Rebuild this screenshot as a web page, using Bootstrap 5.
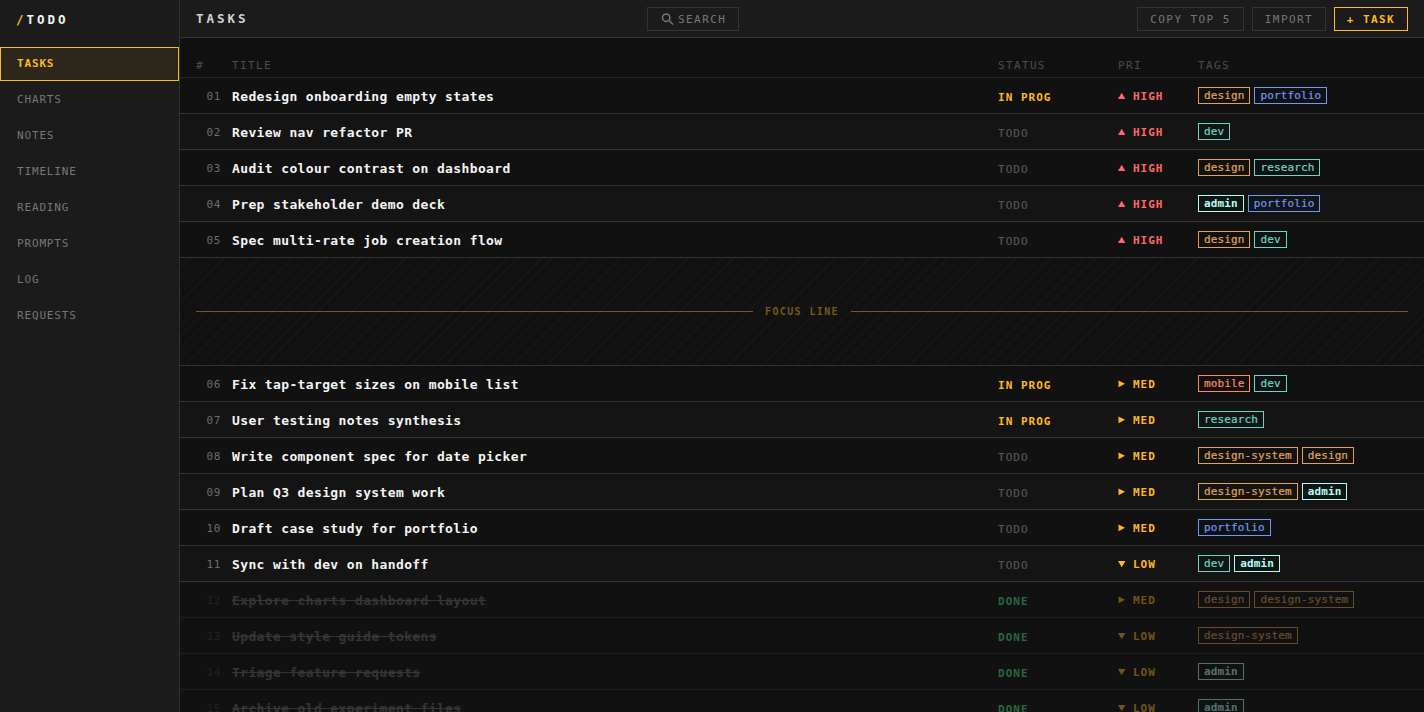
<!DOCTYPE html>
<html lang="en" data-bs-theme="dark">
<head>
<meta charset="utf-8">
<meta name="viewport" content="width=device-width, initial-scale=1">
<title>/TODO</title>
<link href="https://cdn.jsdelivr.net/npm/bootstrap@5.3.0/dist/css/bootstrap.min.css" rel="stylesheet">
<style>
  :root { --amber: #ffb824; --line: #333; --panel: #1b1b1b; --mono: "DejaVu Sans Mono", "Liberation Mono", monospace; }
  body { font-family: var(--mono); font-size: 11px; line-height: 16px; background: #111; color: #f5f5f5; }
  .side { width: 180px; background: var(--panel); border-right: 1px solid var(--line); }
  .brand { font: 700 12.5px/18px var(--mono); letter-spacing: 2.95px; height: 47px; padding: 11px 16px; }
  .brand span { color: var(--amber); }
  .side .nav { gap: 2px; }
  .side .nav-link { height: 34px; padding: 7px 16px; border: 1px solid transparent; border-radius: 0; font-size: 11px; line-height: 17px; letter-spacing: .84px; color: #777; }
  .side .nav-link.active { color: var(--amber); background: #2c261b; border-color: var(--amber); font-weight: 700; }
  .topbar { height: 38px; background: var(--panel); border-bottom: 1px solid var(--line); padding: 0 16px; }
  .topbar h1 { font: 700 12.5px/18px var(--mono); letter-spacing: 2.95px; color: #d4d4d4; }
  .tool { --bs-btn-padding-x: 0; --bs-btn-padding-y: 0; --bs-btn-border-radius: 0; --bs-btn-color: #777; --bs-btn-border-color: #333; --bs-btn-font-size: 11px; --bs-btn-line-height: 22px; height: 24px; width: 74px; letter-spacing: 1.43px; padding-top: 1px; line-height: 21px; }
  .tool-wide { width: 107px; }
  .tool-search { width: 92px; padding-left: 2px; }
  .tool-main { --bs-btn-color: var(--amber); --bs-btn-border-color: var(--amber); font-weight: 700; }
  .line { display: grid; grid-template-columns: 36px 1fr 120px 80px 210px; align-items: center; height: 36px; padding: 0 16px; border-bottom: 1px solid var(--line); }
  .line-head { height: 40px; padding-top: 17px; border-color: #262626; color: #4d4d4d; font-size: 11px; letter-spacing: 1.35px; }
  .line.alt { background: #141414; }
  .num { color: #6c6c6c; letter-spacing: .6px; padding: 2px 11px 0 0; text-align: right; }
  .ttl { font-size: 13px; font-weight: 700; letter-spacing: .37px; line-height: 18px; padding-top: 2px; }
  .st { letter-spacing: 1.02px; padding-top: 4px; color: #555; -webkit-text-stroke: .2px; }
  .st-prog { color: var(--amber); font-weight: 700; -webkit-text-stroke: 0; }
  .st-done { color: #3ebd6c; font-weight: 700; -webkit-text-stroke: 0; }
  .pr { font-weight: 700; letter-spacing: 1px; color: var(--amber); padding-top: 2px; }
  .pr svg { width: 8px; height: 8px; margin-right: 7px; fill: currentColor; vertical-align: 0; }
  .pr-high { color: #ff6868; }
  .chips { gap: 4px; }
  .chip { border: 1px solid; height: 17px; line-height: 15px; padding: 0 5px; letter-spacing: .12px; -webkit-text-stroke: .2px; }
  .chip-design { color: #e0a458; }
  .chip-portfolio { color: #6d9af8; }
  .chip-dev { color: #6bd6c2; }
  .chip-admin { color: #b0fff4; font-weight: 700; -webkit-text-stroke: 0; }
  .chip-mobile { color: #ff8a5c; }
  .finished { border-color: #1e1e1e; }
  .finished .num { color: #222; }
  .finished .ttl { color: #353535; text-decoration: line-through; }
  .finished .st { opacity: .5; }
  .finished .pr, .finished .chips { opacity: .4; }
  .focus-band { height: 108px; padding: 0 16px; gap: 12px; border-bottom: 1px solid var(--line); color: #77581a; font-weight: 700; font-size: 10px; letter-spacing: 1.38px; background: repeating-linear-gradient(135deg, transparent 0 7px, #171717 7px 8px); }
  .focus-band::before, .focus-band::after { content: ""; flex: 1; height: 1px; background: #77581a; }
</style>
</head>
<body>
<div class="d-flex vh-100 overflow-hidden">
  <aside class="side flex-shrink-0">
    <div class="brand"><span>/</span>TODO</div>
    <nav class="nav flex-column">
      <a class="nav-link active" href="#">TASKS</a>
      <a class="nav-link" href="#">CHARTS</a>
      <a class="nav-link" href="#">NOTES</a>
      <a class="nav-link" href="#">TIMELINE</a>
      <a class="nav-link" href="#">READING</a>
      <a class="nav-link" href="#">PROMPTS</a>
      <a class="nav-link" href="#">LOG</a>
      <a class="nav-link" href="#">REQUESTS</a>
    </nav>
  </aside>
  <main class="flex-grow-1 overflow-hidden">
    <header class="topbar d-flex align-items-center justify-content-between">
      <h1 class="m-0">TASKS</h1>
      <button class="btn tool tool-search d-flex align-items-center justify-content-center"><svg class="me-1" width="13" height="13" viewBox="0 0 13 13" fill="none" stroke="currentColor" stroke-width="1.5"><circle cx="5.2" cy="4.7" r="3.7"/><path d="M8 7.5l4 4"/></svg>SEARCH</button>
      <div class="d-flex gap-2">
        <button class="btn tool tool-wide">COPY TOP 5</button>
        <button class="btn tool">IMPORT</button>
        <button class="btn tool tool-main">+ TASK</button>
      </div>
    </header>
    <div class="line line-head"><span>#</span><span>TITLE</span><span>STATUS</span><span>PRI</span><span>TAGS</span></div>
    <div id="tasks"></div>
  </main>
</div>
<script src="https://cdn.jsdelivr.net/npm/bootstrap@5.3.0/dist/js/bootstrap.bundle.min.js"></script>
<script>
  const tasks = [
    ["Redesign onboarding empty states", "IN PROG", "HIGH", "design portfolio"],
    ["Review nav refactor PR", "TODO", "HIGH", "dev"],
    ["Audit colour contrast on dashboard", "TODO", "HIGH", "design research"],
    ["Prep stakeholder demo deck", "TODO", "HIGH", "admin portfolio"],
    ["Spec multi-rate job creation flow", "TODO", "HIGH", "design dev"],
    ["Fix tap-target sizes on mobile list", "IN PROG", "MED", "mobile dev"],
    ["User testing notes synthesis", "IN PROG", "MED", "research"],
    ["Write component spec for date picker", "TODO", "MED", "design-system design"],
    ["Plan Q3 design system work", "TODO", "MED", "design-system admin"],
    ["Draft case study for portfolio", "TODO", "MED", "portfolio"],
    ["Sync with dev on handoff", "TODO", "LOW", "dev admin"],
    ["Explore charts dashboard layout", "DONE", "MED", "design design-system"],
    ["Update style guide tokens", "DONE", "LOW", "design-system"],
    ["Triage feature requests", "DONE", "LOW", "admin"],
    ["Archive old experiment files", "DONE", "LOW", "admin"]
  ];
  const arrows = { HIGH: "M0 7L3.7 .7L7.4 7z", MED: "M.5 .5L7 3.8L.5 7.2z", LOW: "M0 1H7.4L3.7 7.2z" };
  const statusClass = { "IN PROG": "st-prog", DONE: "st-done", TODO: "" };
  const hue = { "design-system": "design", research: "dev" };
  // the focus line counts as a row, so striping flips after it
  const striped = i => i < 5 ? i % 2 === 1 : i % 2 === 0;
  document.getElementById("tasks").innerHTML = tasks.map(([title, status, pri, tags], i) => {
    const chips = tags.split(" ").map(t => `<span class="chip chip-${hue[t] || t}">${t}</span>`).join("");
    const rowClass = status === "DONE" ? "finished" : striped(i) ? "alt" : "";
    return `<div class="line ${rowClass}">
      <span class="num">${String(i + 1).padStart(2, "0")}</span>
      <span class="ttl"><span>${title}</span></span>
      <span class="st ${statusClass[status]}">${status}</span>
      <span class="pr ${pri === "HIGH" ? "pr-high" : ""}"><svg viewBox="0 0 8 8"><path d="${arrows[pri]}"/></svg>${pri}</span>
      <span class="chips d-flex">${chips}</span>
    </div>${i === 4 ? '<div class="focus-band d-flex align-items-center">FOCUS LINE</div>' : ""}`;
  }).join("");
</script>
</body>
</html>
